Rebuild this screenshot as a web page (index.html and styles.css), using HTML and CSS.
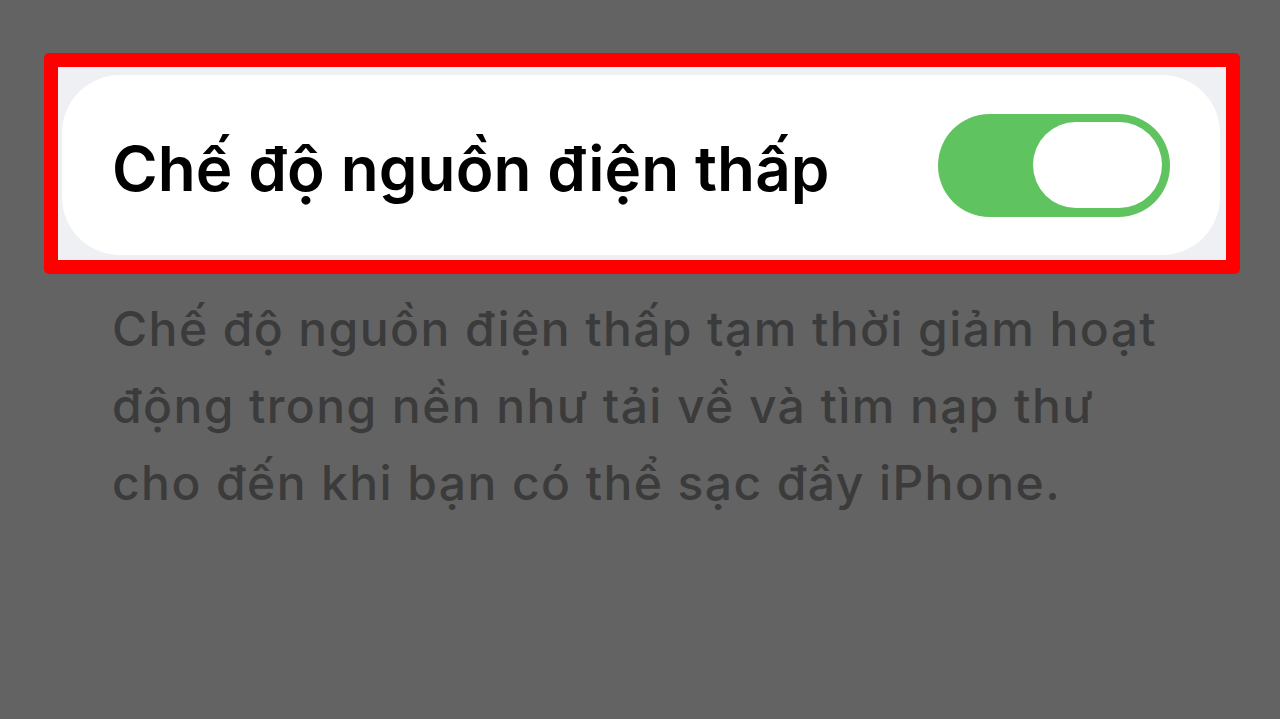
FILE: index.html
```html
<!DOCTYPE html>
<html lang="vi">
<head>
  <meta charset="UTF-8">
  <meta name="viewport" content="width=device-width, initial-scale=1.0">
  <title>Pin</title>
  <link rel="stylesheet" href="styles.css">
</head>
<body>
  <div class="page">
    <div class="highlight">
      <div class="row">
        <span class="row-label">Chế độ nguồn điện thấp</span>
        <div class="switch is-on">
          <div class="knob"></div>
        </div>
      </div>
    </div>

    <p class="footnote">Chế độ nguồn điện thấp tạm thời giảm hoạt động trong nền như tải về và tìm nạp thư cho đến khi bạn có thể sạc đầy iPhone.</p>
  </div>
</body>
</html>
```

FILE: styles.css
```css
body {
  margin: 0;
  background-color: #636363;
  font-family: Inter, Roboto, 'Noto Sans', sans-serif;
}

.page {
  padding: 53px 40px 0 44px;
}

.highlight {
  width: 1158px;
  border: 14px solid #fe0000;
  border-radius: 5px;
  background-color: #eff0f4;
  padding: 8px 6px 5px 4px;
}

.row {
  height: 180px;
  background-color: #ffffff;
  border-radius: 58px;
  display: flex;
  align-items: center;
  justify-content: space-between;
  padding: 0 50px 0 50px;
}

.row-label {
  font-size: 62px;
  font-weight: 600;
  color: #000000;
  letter-spacing: 0.1px;
  padding-top: 6px;
}

.switch {
  width: 232px;
  height: 103px;
  border-radius: 52px;
  background-color: #5fc35f;
  display: flex;
  align-items: center;
  justify-content: flex-end;
  padding: 0 8px;
  box-sizing: border-box;
}

.knob {
  width: 129px;
  height: 86px;
  border-radius: 43px;
  background-color: #ffffff;
}

.footnote {
  margin: 16px 0 0 68px;
  width: 1080px;
  font-size: 48px;
  line-height: 77px;
  font-weight: 500;
  letter-spacing: 1.4px;
  color: #3b3b3b;
}
```
